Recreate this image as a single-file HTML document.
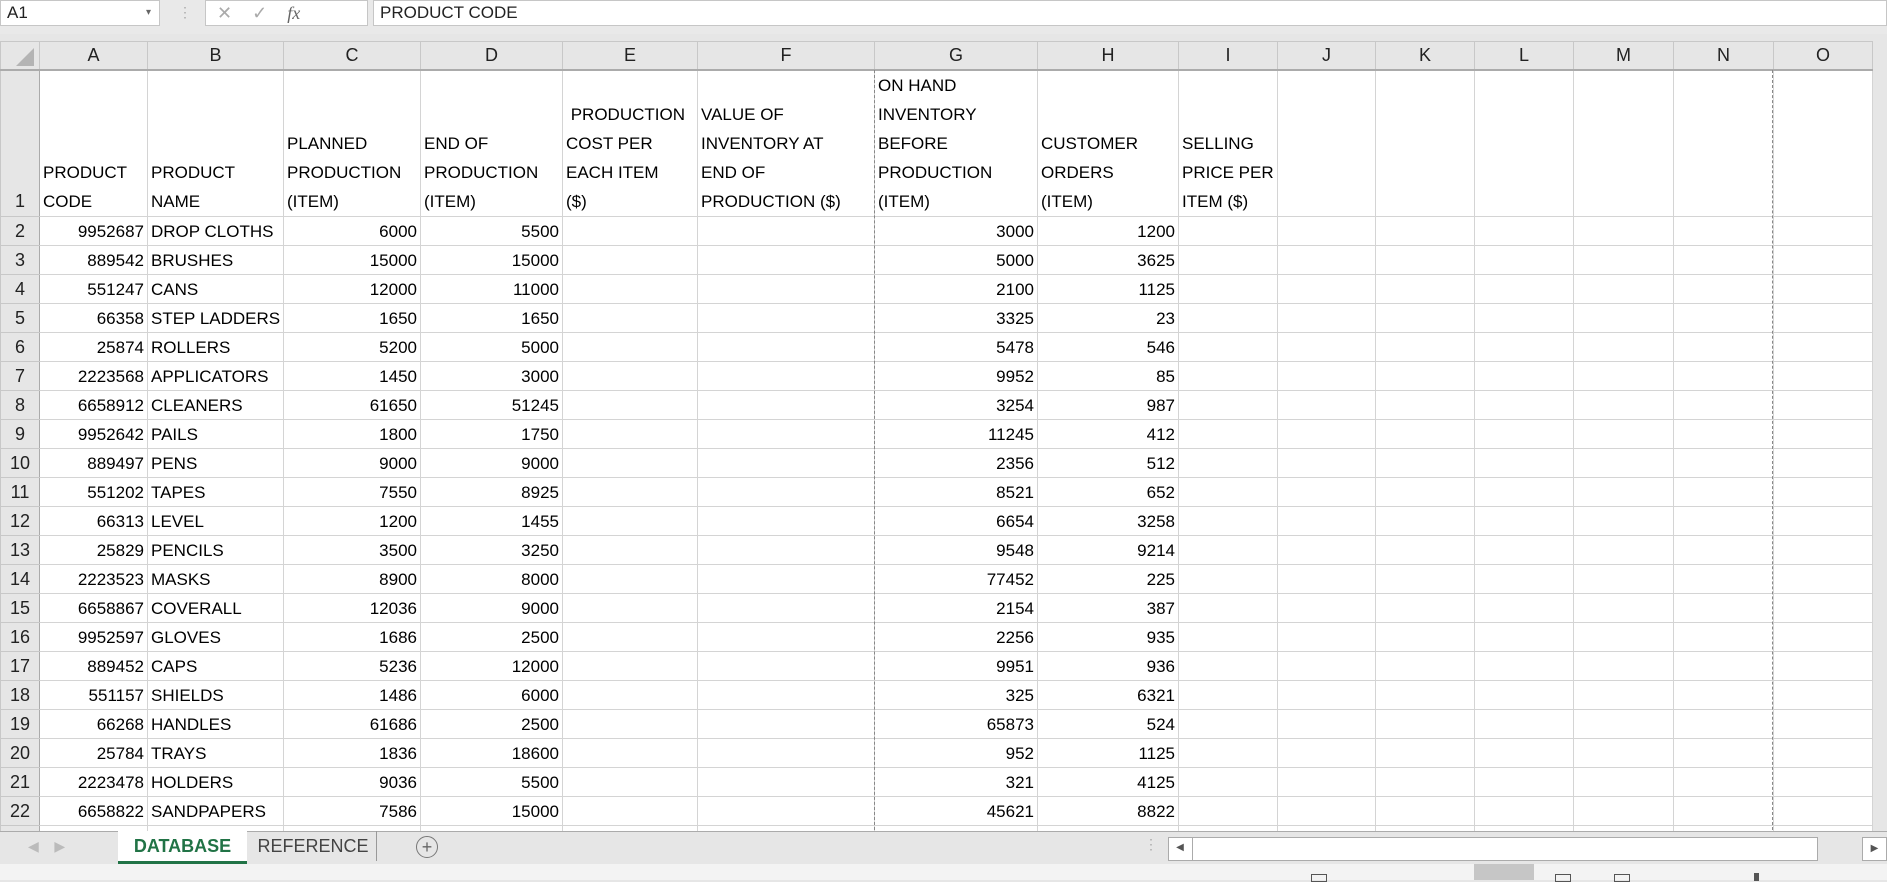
<!DOCTYPE html>
<html><head><meta charset="utf-8"><style>
*{margin:0;padding:0;box-sizing:border-box}
body{width:1887px;height:880px;overflow:hidden;background:#e6e6e6;font-family:"Liberation Sans",sans-serif;position:relative;color:#000}
.abs{position:absolute}
#top{left:0;top:0;width:1887px;height:34px;background:#e9e9e9}
.box{position:absolute;background:#fff;border:1px solid #c6c6c6;font-size:17px;line-height:24px;padding-left:6px;color:#222}
table{position:absolute;left:0;top:41px;width:1872px;border-collapse:collapse;table-layout:fixed;background:#fff}
td{border:1px solid #d4d4d4;height:29px;font-size:17px;padding:0 3px;white-space:nowrap;overflow:hidden;vertical-align:bottom;line-height:27px}
tr.h td{background:#e6e6e6;text-align:center;height:28px;line-height:24px;border-color:#c8c8c8;border-bottom:2px solid #ababab;color:#222;font-size:18px;vertical-align:middle}
td.rh{background:#e6e6e6;text-align:center;border-color:#c8c8c8;border-right:1px solid #ababab;color:#222;padding:0;font-size:18px}
tr.r1 td{height:145px;line-height:29px}
td.n{text-align:right}
.dash{position:absolute;top:70px;height:760px;width:0;border-left:1px dashed #888}
</style></head><body>
<div id="top" class="abs">
 <div class="box" style="left:0;top:0;width:160px;height:26px">A1<span style="position:absolute;right:8px;top:0;font-size:10px;color:#666">▾</span></div>
 <div class="abs" style="left:178px;top:4px;color:#aaa;font-size:14px">⋮</div>
 <div class="box" style="left:205px;top:0;width:163px;height:26px;color:#aaa;font-size:18px">&nbsp;✕&nbsp;&nbsp;&nbsp;&nbsp;✓&nbsp;&nbsp;&nbsp;&nbsp;<i style="font-family:'Liberation Serif',serif;color:#666">fx</i></div>
 <div class="box" style="left:373px;top:0;width:1514px;height:26px">PRODUCT CODE</div>
</div>
<table>
<colgroup><col style="width:39px"><col style="width:108px"><col style="width:136px"><col style="width:137px"><col style="width:142px"><col style="width:135px"><col style="width:177px"><col style="width:163px"><col style="width:141px"><col style="width:99px"><col style="width:98px"><col style="width:99px"><col style="width:99px"><col style="width:100px"><col style="width:100px"><col style="width:99px"></colgroup>
<tr class="h"><td style="background:#e6e6e6;position:relative"></td><td>A</td><td>B</td><td>C</td><td>D</td><td>E</td><td>F</td><td>G</td><td>H</td><td>I</td><td>J</td><td>K</td><td>L</td><td>M</td><td>N</td><td>O</td></tr>
<tr class="r1"><td class="rh" style="vertical-align:bottom">1</td><td>PRODUCT<br>CODE</td><td>PRODUCT<br>NAME</td><td>PLANNED<br>PRODUCTION<br>(ITEM)</td><td>END OF<br>PRODUCTION<br>(ITEM)</td><td>&nbsp;PRODUCTION<br>COST PER<br>EACH ITEM<br>($)</td><td>VALUE OF<br>INVENTORY AT<br>END OF<br>PRODUCTION ($)</td><td>ON HAND<br>INVENTORY<br>BEFORE<br>PRODUCTION<br>(ITEM)</td><td>CUSTOMER<br>ORDERS<br>(ITEM)</td><td>SELLING<br>PRICE PER<br>ITEM ($)</td><td></td><td></td><td></td><td></td><td></td><td></td></tr>
<tr><td class="rh">2</td><td class="n">9952687</td><td>DROP CLOTHS</td><td class="n">6000</td><td class="n">5500</td><td></td><td></td><td class="n">3000</td><td class="n">1200</td><td></td><td></td><td></td><td></td><td></td><td></td><td></td></tr>
<tr><td class="rh">3</td><td class="n">889542</td><td>BRUSHES</td><td class="n">15000</td><td class="n">15000</td><td></td><td></td><td class="n">5000</td><td class="n">3625</td><td></td><td></td><td></td><td></td><td></td><td></td><td></td></tr>
<tr><td class="rh">4</td><td class="n">551247</td><td>CANS</td><td class="n">12000</td><td class="n">11000</td><td></td><td></td><td class="n">2100</td><td class="n">1125</td><td></td><td></td><td></td><td></td><td></td><td></td><td></td></tr>
<tr><td class="rh">5</td><td class="n">66358</td><td>STEP LADDERS</td><td class="n">1650</td><td class="n">1650</td><td></td><td></td><td class="n">3325</td><td class="n">23</td><td></td><td></td><td></td><td></td><td></td><td></td><td></td></tr>
<tr><td class="rh">6</td><td class="n">25874</td><td>ROLLERS</td><td class="n">5200</td><td class="n">5000</td><td></td><td></td><td class="n">5478</td><td class="n">546</td><td></td><td></td><td></td><td></td><td></td><td></td><td></td></tr>
<tr><td class="rh">7</td><td class="n">2223568</td><td>APPLICATORS</td><td class="n">1450</td><td class="n">3000</td><td></td><td></td><td class="n">9952</td><td class="n">85</td><td></td><td></td><td></td><td></td><td></td><td></td><td></td></tr>
<tr><td class="rh">8</td><td class="n">6658912</td><td>CLEANERS</td><td class="n">61650</td><td class="n">51245</td><td></td><td></td><td class="n">3254</td><td class="n">987</td><td></td><td></td><td></td><td></td><td></td><td></td><td></td></tr>
<tr><td class="rh">9</td><td class="n">9952642</td><td>PAILS</td><td class="n">1800</td><td class="n">1750</td><td></td><td></td><td class="n">11245</td><td class="n">412</td><td></td><td></td><td></td><td></td><td></td><td></td><td></td></tr>
<tr><td class="rh">10</td><td class="n">889497</td><td>PENS</td><td class="n">9000</td><td class="n">9000</td><td></td><td></td><td class="n">2356</td><td class="n">512</td><td></td><td></td><td></td><td></td><td></td><td></td><td></td></tr>
<tr><td class="rh">11</td><td class="n">551202</td><td>TAPES</td><td class="n">7550</td><td class="n">8925</td><td></td><td></td><td class="n">8521</td><td class="n">652</td><td></td><td></td><td></td><td></td><td></td><td></td><td></td></tr>
<tr><td class="rh">12</td><td class="n">66313</td><td>LEVEL</td><td class="n">1200</td><td class="n">1455</td><td></td><td></td><td class="n">6654</td><td class="n">3258</td><td></td><td></td><td></td><td></td><td></td><td></td><td></td></tr>
<tr><td class="rh">13</td><td class="n">25829</td><td>PENCILS</td><td class="n">3500</td><td class="n">3250</td><td></td><td></td><td class="n">9548</td><td class="n">9214</td><td></td><td></td><td></td><td></td><td></td><td></td><td></td></tr>
<tr><td class="rh">14</td><td class="n">2223523</td><td>MASKS</td><td class="n">8900</td><td class="n">8000</td><td></td><td></td><td class="n">77452</td><td class="n">225</td><td></td><td></td><td></td><td></td><td></td><td></td><td></td></tr>
<tr><td class="rh">15</td><td class="n">6658867</td><td>COVERALL</td><td class="n">12036</td><td class="n">9000</td><td></td><td></td><td class="n">2154</td><td class="n">387</td><td></td><td></td><td></td><td></td><td></td><td></td><td></td></tr>
<tr><td class="rh">16</td><td class="n">9952597</td><td>GLOVES</td><td class="n">1686</td><td class="n">2500</td><td></td><td></td><td class="n">2256</td><td class="n">935</td><td></td><td></td><td></td><td></td><td></td><td></td><td></td></tr>
<tr><td class="rh">17</td><td class="n">889452</td><td>CAPS</td><td class="n">5236</td><td class="n">12000</td><td></td><td></td><td class="n">9951</td><td class="n">936</td><td></td><td></td><td></td><td></td><td></td><td></td><td></td></tr>
<tr><td class="rh">18</td><td class="n">551157</td><td>SHIELDS</td><td class="n">1486</td><td class="n">6000</td><td></td><td></td><td class="n">325</td><td class="n">6321</td><td></td><td></td><td></td><td></td><td></td><td></td><td></td></tr>
<tr><td class="rh">19</td><td class="n">66268</td><td>HANDLES</td><td class="n">61686</td><td class="n">2500</td><td></td><td></td><td class="n">65873</td><td class="n">524</td><td></td><td></td><td></td><td></td><td></td><td></td><td></td></tr>
<tr><td class="rh">20</td><td class="n">25784</td><td>TRAYS</td><td class="n">1836</td><td class="n">18600</td><td></td><td></td><td class="n">952</td><td class="n">1125</td><td></td><td></td><td></td><td></td><td></td><td></td><td></td></tr>
<tr><td class="rh">21</td><td class="n">2223478</td><td>HOLDERS</td><td class="n">9036</td><td class="n">5500</td><td></td><td></td><td class="n">321</td><td class="n">4125</td><td></td><td></td><td></td><td></td><td></td><td></td><td></td></tr>
<tr><td class="rh">22</td><td class="n">6658822</td><td>SANDPAPERS</td><td class="n">7586</td><td class="n">15000</td><td></td><td></td><td class="n">45621</td><td class="n">8822</td><td></td><td></td><td></td><td></td><td></td><td></td><td></td></tr>
<tr><td class="rh"></td><td></td><td></td><td></td><td></td><td></td><td></td><td></td><td></td><td></td><td></td><td></td><td></td><td></td><td></td><td></td></tr>
</table>
<div class="dash" style="left:874px"></div>
<div class="dash" style="left:1772px"></div>
<div class="abs" style="left:16px;top:48px;width:0;height:0;border-left:18px solid transparent;border-bottom:18px solid #b4b4b4"></div>
<!-- tab bar -->
<div class="abs" style="left:0;top:831px;width:1887px;height:33px;background:#e6e6e6;border-top:1px solid #ababab"></div>
<div class="abs" style="left:28px;top:838px;color:#bbb;font-size:14px">◀&nbsp;&nbsp;&nbsp;&nbsp;▶</div>
<div class="abs" style="left:118px;top:831px;width:129px;height:33px;background:#fff;border-bottom:3px solid #217346;color:#217346;font-weight:bold;font-size:18px;text-align:center;line-height:30px">DATABASE</div>
<div class="abs" style="left:250px;top:831px;width:127px;height:30px;color:#444;font-size:18px;text-align:center;line-height:30px;border-right:1px solid #999">REFERENCE</div>
<div class="abs" style="left:416px;top:836px;width:22px;height:22px;border:1px solid #777;border-radius:50%;color:#666;text-align:center;line-height:20px;font-size:18px">+</div>
<div class="abs" style="left:1144px;top:836px;color:#aaa;font-size:14px">⋮</div>
<div class="abs" style="left:1168px;top:837px;width:650px;height:24px;background:#fff;border:1px solid #ababab"></div>
<div class="abs" style="left:1168px;top:837px;width:25px;height:24px;border-right:1px solid #ababab;font-size:10px;color:#555;text-align:center;line-height:22px">◀</div>
<div class="abs" style="left:1862px;top:837px;width:25px;height:24px;background:#fff;border:1px solid #ababab;font-size:10px;color:#555;text-align:center;line-height:22px">▶</div>
<!-- status bar -->
<div class="abs" style="left:0;top:864px;width:1887px;height:16px;background:#f3f3f3"></div>
<div class="abs" style="left:1311px;top:874px;width:16px;height:8px;border:1px solid #555"></div>
<div class="abs" style="left:1474px;top:864px;width:60px;height:16px;background:#c6c6c6"></div>
<div class="abs" style="left:1555px;top:874px;width:16px;height:8px;border:1px solid #555"></div>
<div class="abs" style="left:1614px;top:874px;width:16px;height:8px;border:1px solid #555"></div>
<div class="abs" style="left:1754px;top:873px;width:5px;height:8px;background:#555"></div>
</body></html>
